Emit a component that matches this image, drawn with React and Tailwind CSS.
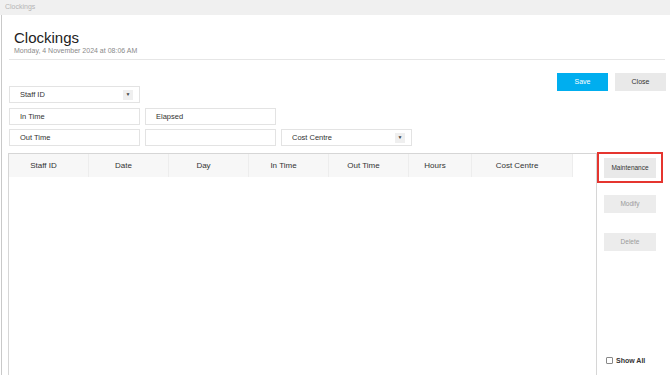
import React from "react";

const Field = ({ label, select }) => (
  <div className="w-[131px] h-[17px] border border-[#e3e3e3] bg-white flex items-center pl-[10px] pr-[6px] text-[7.5px] text-[#333]">
    <span className="flex-1">{label}</span>
    {select && (
      <span className="w-[10px] h-[10px] bg-[#efefef] flex items-center justify-center text-[5px] text-[#444]">
        ▼
      </span>
    )}
  </div>
);

const columns = [
  { name: "Staff ID", w: "w-[80px]" },
  { name: "Date", w: "w-[80px]" },
  { name: "Day", w: "w-[80px]" },
  { name: "In Time", w: "w-[80px]" },
  { name: "Out Time", w: "w-[80px]" },
  { name: "Hours", w: "w-[63px]" },
  { name: "Cost Centre", w: "w-[101px]" },
];

const App = () => {
  return (
    <div className="w-[670px] h-[375px] overflow-hidden bg-white flex flex-col font-['Liberation_Sans',Arial,sans-serif]">
      {/* Title bar */}
      <div className="h-[15px] bg-[#f0f0f0] flex items-center pl-[5px] text-[7px] text-[#b5b5b5] shrink-0">
        Clockings
      </div>

      <div className="flex-1 ml-px border-l border-[#c9c9c9] flex flex-col min-h-0">
        {/* Header */}
        <div className="pl-[12px] pt-[15px]">
          <h1 className="text-[15px] leading-[16px] text-[#222]">Clockings</h1>
          <p className="text-[7px] leading-[9px] text-[#8a8a8a]">Monday, 4 November 2024 at 08:06 AM</p>
        </div>
        <div className="ml-[7px] mr-[5px] mt-[4px] border-t border-[#e6e6e6]" />

        {/* Form + actions */}
        <div className="flex mt-[13px]">
          <div className="flex-1 pl-[7px] pt-[13px] flex flex-col">
            <div className="flex gap-[5px]">
              <Field label="Staff ID" select />
            </div>
            <div className="flex gap-[5px] mt-[5px]">
              <Field label="In Time" />
              <Field label="Elapsed" />
            </div>
            <div className="flex gap-[5px] mt-[4px]">
              <Field label="Out Time" />
              <Field label="" />
              <Field label="Cost Centre" select />
            </div>
          </div>
          <div className="flex gap-[7px] pr-[4px] items-start">
            <button className="w-[51px] h-[18px] bg-[#00aeef] text-white text-[7px]">Save</button>
            <button className="w-[51px] h-[18px] bg-[#e9e9e9] text-[#333] text-[7px]">Close</button>
          </div>
        </div>

        {/* Table + side panel */}
        <div className="flex flex-1 mt-[7px] min-h-0">
          <div className="ml-[6px] w-[589px] border-t border-l border-r border-[#d6d6d6] flex flex-col">
            <div className="flex h-[23px]">
              {columns.map((c) => (
                <div
                  key={c.name}
                  className={`${c.w} h-full bg-[#f7f7f7] border-r border-[#ededed] flex items-center justify-center pr-[10px] text-[8px] text-[#333]`}
                >
                  {c.name}
                </div>
              ))}
            </div>
          </div>

          <div className="flex-1 flex flex-col items-start">
            <div className="-mt-px w-[66px] h-[31px] border-2 border-[#e5352f] flex items-center justify-center">
              <button className="w-[52px] h-[20px] bg-[#e9e9e9] text-[6.5px] text-[#333]">Maintenance</button>
            </div>
            <button className="ml-[7px] mt-[12px] w-[52px] h-[18px] bg-[#ececec] text-[6.5px] text-[#9a9a9a]">Modify</button>
            <button className="ml-[7px] mt-[20px] w-[52px] h-[18px] bg-[#ececec] text-[6.5px] text-[#9a9a9a]">Delete</button>
            <label className="mt-auto mb-[9px] ml-[9px] flex items-center gap-[3px] text-[7px] font-bold text-[#333]">
              <span className="w-[7px] h-[7px] border border-[#888] rounded-[1px] bg-white" />
              Show All
            </label>
          </div>
        </div>
      </div>
    </div>
  );
};

export default App;
